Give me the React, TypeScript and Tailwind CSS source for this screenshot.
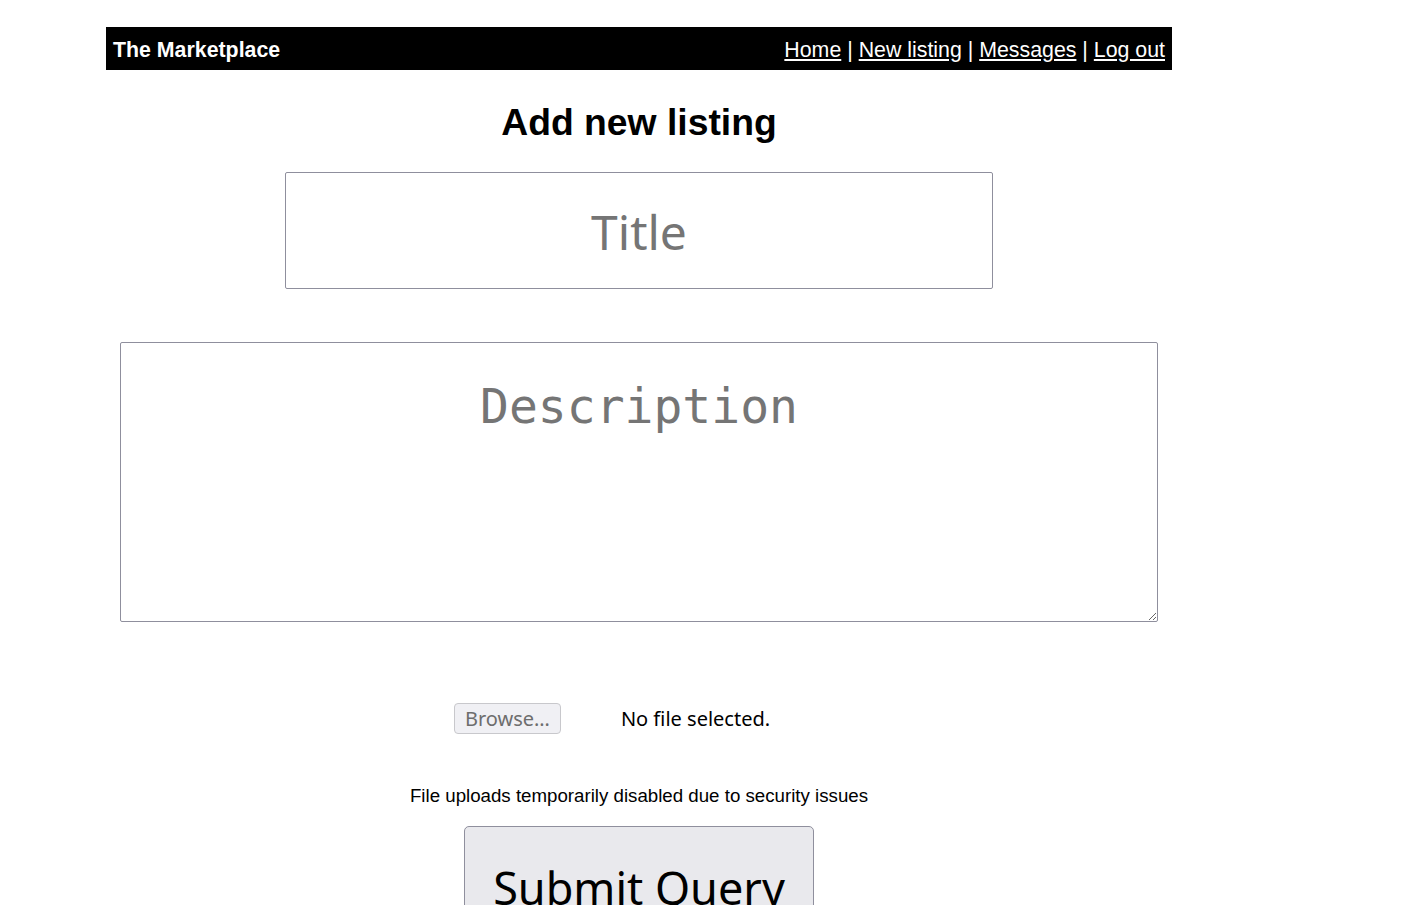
import React from "react";

export default function App() {
  return (
    <div className="min-h-[905px] bg-white">
      <div className="ml-[106px] w-[1066px] pt-[27px]">
        <div className="flex h-[43px] items-center justify-between bg-black px-[7px] pt-[4px] font-['Liberation_Sans',Arial,sans-serif] text-[21.33px] text-white">
          <span className="font-bold">The Marketplace</span>
          <span>
            <a href="#" className="underline">Home</a> |{" "}
            <a href="#" className="underline">New listing</a> |{" "}
            <a href="#" className="underline">Messages</a> |{" "}
            <a href="#" className="underline">Log out</a>
          </span>
        </div>
        <h1 className="mt-[30px] text-center font-['Liberation_Sans',Arial,sans-serif] text-[37.3px] font-bold leading-[44px] text-black">
          Add new listing
        </h1>
        <div className="mt-[28px] flex justify-center">
          <input
            placeholder="Title"
            className="h-[117px] w-[708px] rounded-[2px] border border-[#8f8f9d] pt-[2px] text-center font-['Noto_Sans',sans-serif] text-[48px] placeholder:text-[#757575] outline-none"
          />
        </div>
        <div className="mt-[53px] flex justify-center">
          <textarea
            placeholder="Description"
            className="h-[280px] w-[1038px] resize rounded-[2px] border border-[#8f8f9d] pt-[30px] text-center font-['DejaVu_Sans_Mono',monospace] text-[48px] leading-[66px] placeholder:text-[#757575] outline-none"
          />
        </div>
        <div className="mt-[81px] flex items-center justify-center font-['Noto_Sans',sans-serif] text-[20px]">
          <div className="ml-[-54px] flex items-center">
            <button className="h-[31px] w-[107px] rounded-[4px] border border-[#c8c8cc] bg-[#f0f0f4] text-[20px] leading-[28px] text-[#6d6d6d]">
              Browse…
            </button>
            <span className="ml-[60px] text-black">No file selected.</span>
          </div>
        </div>
        <p className="mt-[48px] text-center font-['Liberation_Sans',Arial,sans-serif] text-[18.7px] text-black">
          File uploads temporarily disabled due to security issues
        </p>
        <div className="mt-[16px] flex justify-center">
          <button className="h-[110px] w-[350px] rounded-[5px] border border-[#8f8f9d] bg-[#e9e9ed] pt-[14px] font-['Noto_Sans',sans-serif] text-[45px] leading-[60px] text-black">
            Submit Query
          </button>
        </div>
      </div>
    </div>
  );
}
